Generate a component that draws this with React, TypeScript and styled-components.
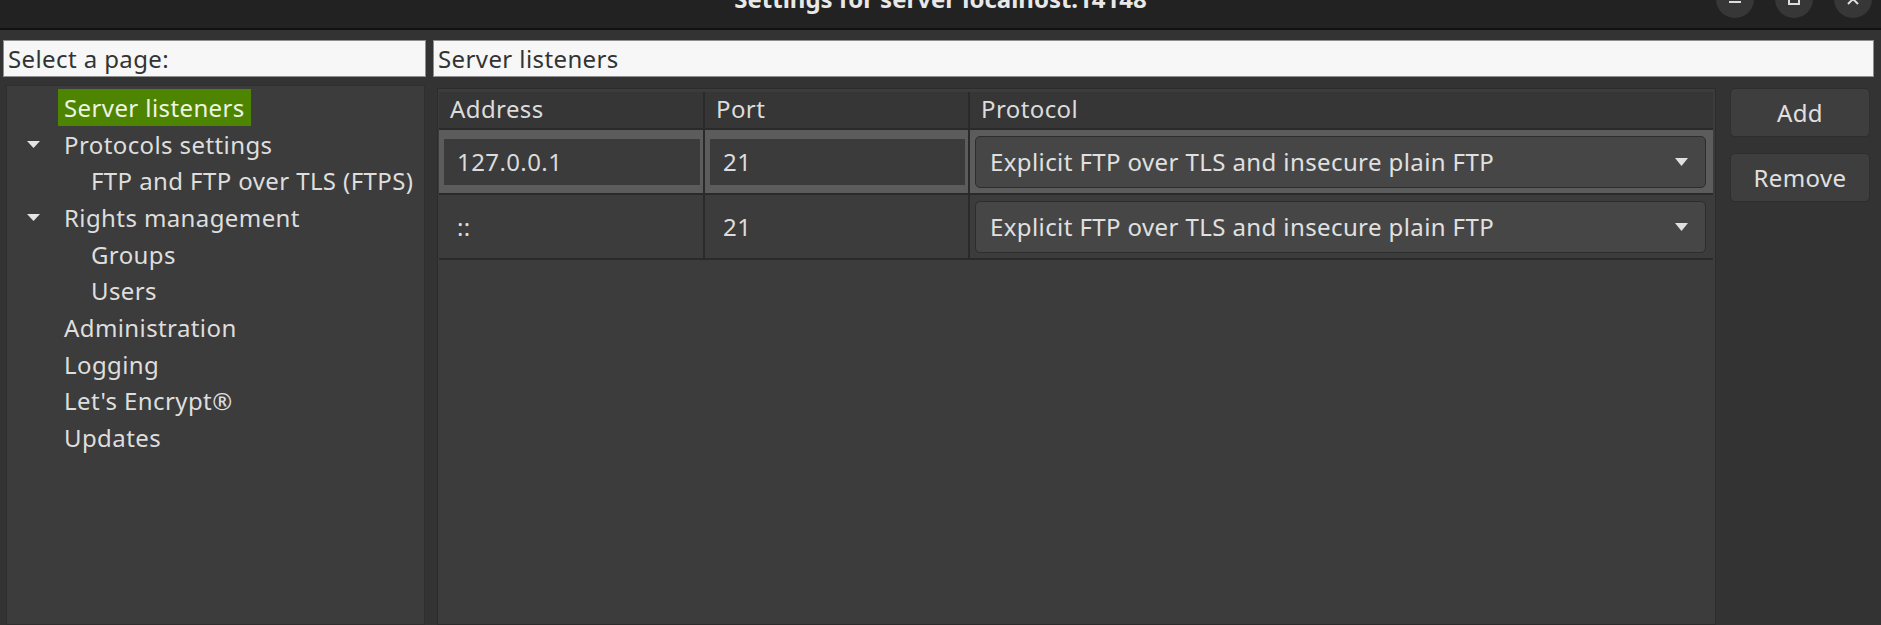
import React from "react"
import styled, { createGlobalStyle } from "styled-components"

const GlobalStyle = createGlobalStyle`
    html, body {
        margin: 0;
        padding: 0;
        background: #333333;
        overflow: hidden;
    }
    body {
        font-family: "Noto Sans", "DejaVu Sans", sans-serif;
        letter-spacing: 0.4px;
    }
`

const Window = styled.div`
    width: 1881px;
    height: 625px;
    display: flex;
    flex-direction: column;
    background: #333333;
    overflow: hidden;
`

const TitleBar = styled.header`
    flex: none;
    height: 28px;
    display: grid;
    grid-template-columns: 1fr auto 1fr;
    background: #222222;
    border-bottom: 2px solid #111111;
    overflow: hidden;
`

const Title = styled.div`
    grid-column: 2;
    margin-top: -16px;
    font-size: 24px;
    font-weight: 700;
    line-height: 30px;
    letter-spacing: 0;
    color: #e8e8e8;
    white-space: nowrap;
`

const Controls = styled.div`
    grid-column: 3;
    justify-self: end;
    display: flex;
    gap: 21px;
    padding-right: 9px;
    margin-top: -20px;
`

const CtrlButton = styled.div`
    width: 38px;
    height: 38px;
    border-radius: 50%;
    background: #373737;
    display: flex;
    align-items: center;
    justify-content: center;
    color: #dddddd;
`

const Body = styled.main`
    flex: 1;
    min-height: 0;
    display: grid;
    grid-template-columns: 423px 1fr;
    grid-template-rows: 37px 1fr;
    column-gap: 7px;
    row-gap: 8px;
    padding: 10px 7px 0 3px;
`

const Label = styled.div`
    box-sizing: border-box;
    background: #f7f7f7;
    border: 1px solid #8e8e8e;
    color: #333333;
    font-size: 24px;
    line-height: 35px;
    padding-left: 4px;
    white-space: nowrap;
    overflow: hidden;
`

const TreePanel = styled.nav`
    margin: 0 1px 0 3px;
    background: #3c3c3c;
    border: 1px solid #2f2f2f;
    padding-top: 3px;
`

const TreeRow = styled.div<{ $level: number }>`
    height: 36.7px;
    display: flex;
    align-items: center;
    padding-left: ${({ $level }) => 19 + ($level - 1) * 27}px;
`

const ArrowSlot = styled.span`
    width: 14px;
    margin-right: 18px;
    display: flex;
    align-items: center;
    justify-content: center;
    color: #e4e4e4;
`

const TreeLabel = styled.span<{ $selected?: boolean }>`
    height: 37px;
    line-height: 37px;
    padding: 0 6px;
    font-size: 24px;
    white-space: nowrap;
    color: ${({ $selected }) => ($selected ? "#eef4e4" : "#dedede")};
    background: ${({ $selected }) => ($selected ? "#4e8500" : "transparent")};
`

const RightSide = styled.section`
    margin: 3px 4px 0 4px;
    display: flex;
    gap: 14px;
    min-height: 0;
`

const TablePanel = styled.div`
    flex: 1;
    background: #3c3c3c;
    border: 1px solid #2c2c2c;
    padding: 3px 2px 0 1px;
`

const Grid = styled.div`
    display: grid;
    grid-template-columns: 266px 265px 1fr;
`

const HeaderCell = styled.div<{ $last?: boolean }>`
    box-sizing: border-box;
    height: 38px;
    line-height: 33px;
    padding-left: 11px;
    background: #363636;
    border-bottom: 2px solid #2a2a2a;
    border-right: ${({ $last }) => ($last ? "none" : "2px solid #2a2a2a")};
    font-size: 24px;
    color: #dcdcdc;
    white-space: nowrap;
`

const Cell = styled.div<{ $selected?: boolean; $last?: boolean }>`
    box-sizing: border-box;
    height: 65px;
    display: flex;
    align-items: center;
    background: ${({ $selected }) => ($selected ? "#5c5c5c" : "#3c3c3c")};
    border-bottom: 2px solid #2a2a2a;
    border-right: ${({ $last }) => ($last ? "none" : "2px solid #2a2a2a")};
    font-size: 24px;
    color: #dcdcdc;
`

const CellText = styled.span`
    padding-left: 18px;
    white-space: nowrap;
`

const Editor = styled.div`
    box-sizing: border-box;
    flex: 1;
    height: 46px;
    margin: 0 3px 0 5px;
    padding-left: 13px;
    line-height: 46px;
    background: #3b3b3b;
    white-space: nowrap;
`

const Combo = styled.div`
    box-sizing: border-box;
    flex: 1;
    height: 52px;
    margin: 0 7px 0 5px;
    padding: 0 17px 0 14px;
    display: flex;
    align-items: center;
    justify-content: space-between;
    background: #464646;
    border: 1px solid #2d2d2d;
    border-radius: 5px;
    color: #e0e0e0;
    white-space: nowrap;
`

const ButtonColumn = styled.div`
    width: 140px;
    display: flex;
    flex-direction: column;
    gap: 16px;
`

const Button = styled.button`
    height: 49px;
    background: #3e3e3e;
    border: 1px solid #2e2e2e;
    border-radius: 5px;
    color: #e0e0e0;
    font-family: inherit;
    font-size: 24px;
    letter-spacing: inherit;
    padding: 0;
`

const DownArrow = ({ w = 13, h = 7 }: { w?: number; h?: number }) => (
    <svg width={w} height={h} viewBox={`0 0 ${w} ${h}`}>
        <polygon points={`0,0 ${w},0 ${w / 2},${h}`} fill="currentColor" />
    </svg>
)

type TreeItem = { label: string; level: number; expandable?: boolean; selected?: boolean }

const treeItems: TreeItem[] = [
    { label: "Server listeners", level: 1, selected: true },
    { label: "Protocols settings", level: 1, expandable: true },
    { label: "FTP and FTP over TLS (FTPS)", level: 2 },
    { label: "Rights management", level: 1, expandable: true },
    { label: "Groups", level: 2 },
    { label: "Users", level: 2 },
    { label: "Administration", level: 1 },
    { label: "Logging", level: 1 },
    { label: "Let's Encrypt®", level: 1 },
    { label: "Updates", level: 1 },
]

const listeners = [
    { address: "127.0.0.1", port: "21", protocol: "Explicit FTP over TLS and insecure plain FTP", selected: true },
    { address: "::", port: "21", protocol: "Explicit FTP over TLS and insecure plain FTP" },
]

export default function App() {
    return (
        <>
            <GlobalStyle />
            <Window>
                <TitleBar>
                    <Title>Settings for server localhost:14148</Title>
                    <Controls>
                        <CtrlButton>
                            <svg width="14" height="14" viewBox="0 0 14 14">
                                <rect x="1" y="9" width="12" height="2" fill="currentColor" />
                            </svg>
                        </CtrlButton>
                        <CtrlButton>
                            <svg width="14" height="14" viewBox="0 0 14 14">
                                <rect x="2" y="2" width="10" height="10" fill="none" stroke="currentColor" strokeWidth="2" />
                            </svg>
                        </CtrlButton>
                        <CtrlButton>
                            <svg width="14" height="14" viewBox="0 0 14 14">
                                <path d="M2 2 L12 12 M12 2 L2 12" stroke="currentColor" strokeWidth="2" />
                            </svg>
                        </CtrlButton>
                    </Controls>
                </TitleBar>
                <Body>
                    <Label>Select a page:</Label>
                    <Label>Server listeners</Label>
                    <TreePanel>
                        {treeItems.map((item) => (
                            <TreeRow key={item.label} $level={item.level}>
                                <ArrowSlot>{item.expandable && <DownArrow w={13} h={7} />}</ArrowSlot>
                                <TreeLabel $selected={item.selected}>{item.label}</TreeLabel>
                            </TreeRow>
                        ))}
                    </TreePanel>
                    <RightSide>
                        <TablePanel>
                            <Grid>
                                <HeaderCell>Address</HeaderCell>
                                <HeaderCell>Port</HeaderCell>
                                <HeaderCell $last>Protocol</HeaderCell>
                                {listeners.map((l, i) => (
                                    <React.Fragment key={i}>
                                        <Cell $selected={l.selected}>
                                            {l.selected ? <Editor>{l.address}</Editor> : <CellText>{l.address}</CellText>}
                                        </Cell>
                                        <Cell $selected={l.selected}>
                                            {l.selected ? <Editor>{l.port}</Editor> : <CellText>{l.port}</CellText>}
                                        </Cell>
                                        <Cell $selected={l.selected} $last>
                                            <Combo>
                                                <span>{l.protocol}</span>
                                                <DownArrow w={13} h={8} />
                                            </Combo>
                                        </Cell>
                                    </React.Fragment>
                                ))}
                            </Grid>
                        </TablePanel>
                        <ButtonColumn>
                            <Button>Add</Button>
                            <Button>Remove</Button>
                        </ButtonColumn>
                    </RightSide>
                </Body>
            </Window>
        </>
    )
}
